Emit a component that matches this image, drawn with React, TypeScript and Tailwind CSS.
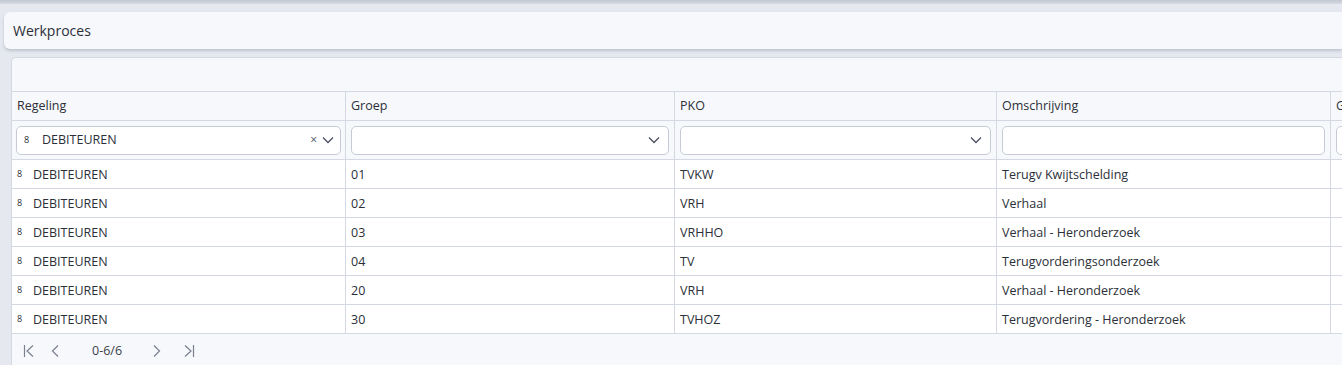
import React from "react";

const rows = [
  ["01", "TVKW", "Terugv Kwijtschelding"],
  ["02", "VRH", "Verhaal"],
  ["03", "VRHHO", "Verhaal - Heronderzoek"],
  ["04", "TV", "Terugvorderingsonderzoek"],
  ["20", "VRH", "Verhaal - Heronderzoek"],
  ["30", "TVHOZ", "Terugvordering - Heronderzoek"],
];

const Chevron = () => (
  <svg width="12" height="8" viewBox="0 0 12 8" fill="none" stroke="#4b5060" strokeWidth="1.3">
    <path d="M1 1.5 L6 6.5 L11 1.5" />
  </svg>
);

export default function App() {
  return (
    <div
      className="w-[1342px] h-[365px] overflow-hidden bg-[#e5e8ef] text-[#2b2f38]"
      style={{ fontFamily: '"Open Sans", "Noto Sans", sans-serif' }}
    >
      <div className="h-[4px] bg-gradient-to-b from-[#c3c7cf] to-[#d6dae3]" />
      <div className="pl-[4px] pt-[8px]">
        <div className="h-[37px] bg-[#f7f8fb] rounded-l-[6px] shadow-[0_2px_3px_rgba(120,130,155,0.35)] flex items-center pl-[9px] text-[14px]">
          Werkproces
        </div>
      </div>
      <div className="pl-[11px] pt-[8px]">
        <div className="bg-[#f7f8fb] rounded-tl-[5px] border-l border-t border-[#d3d8e2] h-[320px]">
          <div className="h-[34px] border-b border-[#d3d8e2]" />
          <div className="grid grid-cols-[334px_329px_322px_334px_20px] text-[12.5px]">
            {["Regeling", "Groep", "PKO", "Omschrijving", "G"].map((h, i) => (
              <div
                key={h}
                className={`h-[29px] flex items-center pl-[5px] border-b border-[#d3d8e2] ${i < 4 ? "border-r" : ""} overflow-hidden whitespace-nowrap`}
              >
                {h}
              </div>
            ))}
            <div className="h-[39px] flex items-center px-[4px] border-b border-r border-[#d3d8e2]">
              <div className="w-full h-[29px] bg-white border border-[#c6cbd5] rounded-[5px] flex items-center pl-[7px] pr-[6px]">
                <span className="text-[9px] w-[18px]">8</span>
                <span className="flex-1">DEBITEUREN</span>
                <span className="text-[12px] text-[#4b5060] mr-[5px]">×</span>
                <Chevron />
              </div>
            </div>
            {[0, 1].map((k) => (
              <div key={k} className="h-[39px] flex items-center px-[5px] border-b border-r border-[#d3d8e2]">
                <div className="w-full h-[29px] bg-white border border-[#c6cbd5] rounded-[5px] flex items-center justify-end pr-[8px]">
                  <Chevron />
                </div>
              </div>
            ))}
            <div className="h-[39px] flex items-center px-[5px] border-b border-r border-[#d3d8e2]">
              <div className="w-full h-[29px] bg-white border border-[#c6cbd5] rounded-[5px]" />
            </div>
            <div className="h-[39px] flex items-center pl-[5px] border-b border-[#d3d8e2] overflow-hidden">
              <div className="w-[30px] shrink-0 h-[29px] bg-white border border-[#c6cbd5] rounded-[5px]" />
            </div>
            {rows.map((r, i) => (
              <React.Fragment key={i}>
                <div className="h-[29px] bg-white flex items-center pl-[5px] pt-[2px] border-b border-r border-[#d3d8e2]">
                  <span className="text-[9px] w-[16px] -mt-[3px]">8</span>
                  <span>DEBITEUREN</span>
                </div>
                <div className="h-[29px] bg-white flex items-center pl-[5px] pt-[2px] border-b border-r border-[#d3d8e2]">{r[0]}</div>
                <div className="h-[29px] bg-white flex items-center pl-[5px] pt-[2px] border-b border-r border-[#d3d8e2]">{r[1]}</div>
                <div className="h-[29px] bg-white flex items-center pl-[5px] pt-[2px] border-b border-r border-[#d3d8e2]">{r[2]}</div>
                <div className="h-[29px] bg-white border-b border-[#d3d8e2]" />
              </React.Fragment>
            ))}
          </div>
          <div className="h-[32px] flex items-center text-[12.5px] text-[#3a3f4a] pt-[2px]">
            <svg className="ml-[11px]" width="12" height="14" viewBox="0 0 12 14" fill="none" stroke="#7a8090" strokeWidth="1.2">
              <path d="M1.5 1 V13" />
              <path d="M10 1.5 L4 7 L10 12.5" />
            </svg>
            <svg className="ml-[16px]" width="8" height="14" viewBox="0 0 8 14" fill="none" stroke="#7a8090" strokeWidth="1.2">
              <path d="M7 1.5 L1.5 7 L7 12.5" />
            </svg>
            <span className="ml-[33px]">0-6/6</span>
            <svg className="ml-[31px]" width="8" height="14" viewBox="0 0 8 14" fill="none" stroke="#7a8090" strokeWidth="1.2">
              <path d="M1 1.5 L6.5 7 L1 12.5" />
            </svg>
            <svg className="ml-[22px]" width="12" height="14" viewBox="0 0 12 14" fill="none" stroke="#7a8090" strokeWidth="1.2">
              <path d="M2 1.5 L8 7 L2 12.5" />
              <path d="M10.5 1 V13" />
            </svg>
          </div>
        </div>
      </div>
    </div>
  );
}
